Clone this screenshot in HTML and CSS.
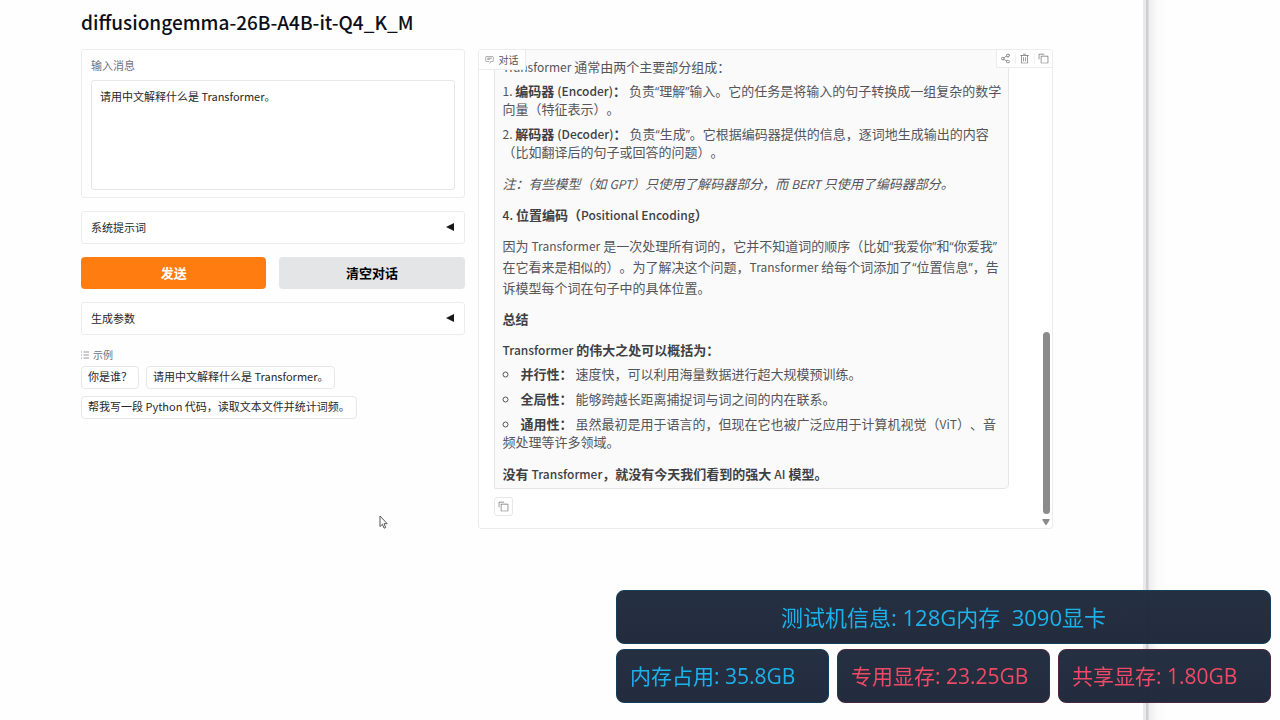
FILE: index.html
```html
<!DOCTYPE html>
<html lang="zh-CN">
<head>
    <meta charset="UTF-8">
    <meta name="viewport" content="width=device-width, initial-scale=1.0">
    <title>diffusiongemma-26B-A4B-it-Q4_K_M</title>
    <link rel="stylesheet" href="styles.css">
</head>
<body>
    <main class="window">
        <h1>diffusiongemma-26B-A4B-it-Q4_K_M</h1>

        <div class="columns">
            <!-- Left: input and settings -->
            <section class="controls">
                <div class="block message-block">
                    <label for="message">输入消息</label>
                    <textarea id="message">请用中文解释什么是 Transformer。</textarea>
                </div>

                <button class="block accordion" type="button"><span>系统提示词</span><svg class="arrow" viewBox="0 0 8 8"><path d="M8 0v8L0 4z"/></svg></button>

                <div class="actions">
                    <button class="btn primary" type="button">发送</button>
                    <button class="btn secondary" type="button">清空对话</button>
                </div>

                <button class="block accordion" type="button"><span>生成参数</span><svg class="arrow" viewBox="0 0 8 8"><path d="M8 0v8L0 4z"/></svg></button>

                <div class="examples">
                    <div class="examples-label">
                        <svg class="list-icon" viewBox="0 0 8 8"><path d="M0 1h1M2.5 1H8M0 4h1M2.5 4H8M0 7h1M2.5 7H8"/></svg>
                        <span>示例</span>
                    </div>
                    <div class="chips">
                        <button class="chip" type="button">你是谁？</button>
                        <button class="chip" type="button">请用中文解释什么是 Transformer。</button>
                        <button class="chip" type="button">帮我写一段 Python 代码，读取文本文件并统计词频。</button>
                    </div>
                </div>
            </section>

            <!-- Right: conversation -->
            <section class="chat">
                <div class="chat-label">
                    <svg class="icon" viewBox="0 0 32 32"><path d="M17.7 30 16 29l4-7h6a2 2 0 0 0 2-2V8a2 2 0 0 0-2-2H6a2 2 0 0 0-2 2v12a2 2 0 0 0 2 2h9v2H6a4 4 0 0 1-4-4V8a4 4 0 0 1 4-4h20a4 4 0 0 1 4 4v12a4 4 0 0 1-4 4h-4.8z"/><path d="M8 10h16v2H8zM8 16h10v2H8z"/></svg>
                    <span>对话</span>
                </div>
                <div class="toolbar">
                    <button type="button" aria-label="分享"><svg class="icon" viewBox="0 0 32 32"><path d="M23 20a5 5 0 0 0-3.9 1.8l-6.3-3.9a5 5 0 0 0 0-3.8l6.3-3.9a5 5 0 1 0-1.1-3.2 5 5 0 0 0 .2 1.4l-6.4 4a5 5 0 1 0 0 7.2l6.4 4A5 5 0 1 0 23 20zm0-16a3 3 0 1 1 0 6 3 3 0 0 1 0-6zM8 19a3 3 0 1 1 0-6 3 3 0 0 1 0 6zm15 9a3 3 0 1 1 0-6 3 3 0 0 1 0 6z"/></svg></button>
                    <button type="button" aria-label="清空"><svg class="icon" viewBox="0 0 32 32"><path d="M12 12h2v12h-2zM18 12h2v12h-2z"/><path d="M4 6v2h2v20a2 2 0 0 0 2 2h16a2 2 0 0 0 2-2V8h2V6zm4 22V8h16v20zM12 2h8v2h-8z"/></svg></button>
                    <button type="button" aria-label="复制"><svg class="icon" viewBox="0 0 32 32"><path d="M28 10v18H10V10h18m0-2H10a2 2 0 0 0-2 2v18a2 2 0 0 0 2 2h18a2 2 0 0 0 2-2V10a2 2 0 0 0-2-2z"/><path d="M4 18H2V4a2 2 0 0 1 2-2h14v2H4z"/></svg></button>
                </div>

                <div class="messages">
                    <article class="bubble">
                        <p><span class="en">Transformer</span> 通常由两个主要部分组成：</p>
                        <ol>
                            <li><strong>编码器 <span class="en">(Encoder)</span>：</strong> 负责<q>理解</q>输入。它的任务是将输入的句子转换成一组复杂的数学向量（特征表示）。</li>
                            <li><strong>解码器 <span class="en">(Decoder)</span>：</strong> 负责<q>生成</q>。它根据编码器提供的信息，逐词地生成输出的内容（比如翻译后的句子或回答的问题）。</li>
                        </ol>
                        <p><em>注：有些模型（如 <span class="en">GPT</span>）只使用了解码器部分，而 <span class="en">BERT</span> 只使用了编码器部分。</em></p>
                        <p><strong><span class="en">4.</span> 位置编码（<span class="en">Positional Encoding</span>）</strong></p>
                        <p>因为 <span class="en">Transformer</span> 是一次处理所有词的，它并不知道词的顺序（比如<q>我爱你</q>和<q>你爱我</q>在它看来是相似的）。为了解决这个问题，<span class="en">Transformer</span> 给每个词添加了<q>位置信息</q>，告诉模型每个词在句子中的具体位置。</p>
                        <p><strong>总结</strong></p>
                        <p><strong><span class="en">Transformer</span> 的伟大之处可以概括为：</strong></p>
                        <ul>
                            <li><strong>并行性：</strong> 速度快，可以利用海量数据进行超大规模预训练。</li>
                            <li><strong>全局性：</strong> 能够跨越长距离捕捉词与词之间的内在联系。</li>
                            <li><strong>通用性：</strong> 虽然最初是用于语言的，但现在它也被广泛应用于计算机视觉（<span class="en">ViT</span>）、音频处理等许多领域。</li>
                        </ul>
                        <p><strong>没有 <span class="en">Transformer</span>，就没有今天我们看到的强大 <span class="en">AI</span> 模型。</strong></p>
                    </article>
                    <button class="copy" type="button" aria-label="复制消息"><svg class="icon" viewBox="0 0 32 32"><path d="M28 10v18H10V10h18m0-2H10a2 2 0 0 0-2 2v18a2 2 0 0 0 2 2h18a2 2 0 0 0 2-2V10a2 2 0 0 0-2-2z"/><path d="M4 18H2V4a2 2 0 0 1 2-2h14v2H4z"/></svg></button>
                </div>

                <div class="scrollbar">
                    <div class="thumb"></div>
                    <svg class="down" viewBox="0 0 8 6"><path d="M1 0h6q1 0 .6 1L4.8 5.4q-.8 1-1.6 0L.4 1Q0 0 1 0z"/></svg>
                </div>
            </section>
        </div>
    </main>
    <div class="desktop"></div>

    <!-- Machine monitor overlay -->
    <aside class="monitor">
        <div class="stat machine">测试机信息: 128G内存&nbsp; 3090显卡</div>
        <div class="stat">内存占用: 35.8GB</div>
        <div class="stat gpu">专用显存: 23.25GB</div>
        <div class="stat gpu">共享显存: 1.80GB</div>
    </aside>

    <svg class="cursor" viewBox="0 0 9 14"><path d="M1 1v10.5l2.4-2.2 1.7 3.9 1.6-.7L5 8.7h3.2z"/></svg>
</body>
</html>
```

FILE: styles.css
```css
* {
    box-sizing: border-box;
}

body {
    margin: 0;
    min-height: 100vh;
    display: flex;
    overflow: hidden;
    background: #fefefe;
    color: #27272a;
    font-family: "Noto Sans CJK SC", sans-serif;
    font-size: 11px;
    line-height: 16px;
    text-spacing-trim: space-all;
}

button,
textarea {
    font: inherit;
    color: inherit;
}

button {
    margin: 0;
    cursor: pointer;
}

.window {
    flex: 1;
    padding: 7px 90px 0 81px;
}

.desktop {
    width: 137px;
    background: linear-gradient(90deg, #eae8eb 0, #eae8eb 3px, #cfced1 3px, #cfced1 5px, #ededee 6px, #fafafa 14px, #fefefe 24px);
}

h1 {
    margin: 0 0 13px;
    font-size: 19px;
    font-weight: 500;
    line-height: 29px;
    color: #0b0f19;
}

.columns {
    display: grid;
    grid-template-columns: 2fr 3fr;
    gap: 13px;
    align-items: start;
}

.controls {
    display: flex;
    flex-direction: column;
    gap: 13px;
}

.block {
    background: #fff;
    border: 1px solid #ececee;
    border-radius: 3px;
}

.message-block {
    display: flex;
    flex-direction: column;
    gap: 7px;
    padding: 7px 9px;
}

.message-block label {
    color: #71717a;
}

textarea {
    height: 110px;
    padding: 7px 8px;
    border: 1px solid #e7e7e9;
    border-radius: 3px;
    background: #fff;
    outline: none;
    resize: none;
}

.accordion {
    display: flex;
    justify-content: space-between;
    align-items: center;
    height: 33px;
    padding: 0 10px 2px 9px;
    text-align: left;
}

.arrow {
    width: 8px;
    height: 8px;
    fill: #18181b;
}

.actions {
    display: grid;
    grid-template-columns: 1fr 1fr;
    gap: 13px;
}

.btn {
    height: 32px;
    border: 0;
    border-radius: 4px;
    font-size: 13px;
    font-weight: 700;
}

.primary {
    background: #ff7c11;
    color: #fff;
}

.secondary {
    background: #e4e5e7;
    color: #000;
}

.examples-label {
    display: flex;
    align-items: center;
    gap: 4px;
    margin-bottom: 4px;
    font-size: 10px;
    line-height: 14px;
    color: #71717a;
}

.list-icon {
    width: 8px;
    height: 8px;
    stroke: #9a9aa0;
    stroke-width: 1;
}

.chips {
    display: flex;
    flex-wrap: wrap;
    gap: 7px;
}

.chip {
    height: 23px;
    padding: 0 6px 2px;
    border: 1px solid #e7e7e9;
    border-radius: 4px;
    background: #fff;
    line-height: 19px;
}

/* Conversation panel */
.chat {
    position: relative;
    display: flex;
    height: 480px;
    overflow: hidden;
    background: #fff;
    border: 1px solid #ececee;
    border-radius: 3px;
}

.icon {
    width: 11px;
    height: 11px;
    fill: #6f6f75;
}

.chat-label,
.toolbar {
    position: absolute;
    top: 0;
    z-index: 1;
    display: flex;
    align-items: center;
    background: #fff;
    border: 1px solid #ececee;
    border-top: 0;
}

.chat-label {
    left: 0;
    gap: 5px;
    height: 20px;
    padding: 0 6px;
    border-left: 0;
    font-size: 10px;
    color: #52525b;
}

.chat-label .icon {
    width: 9px;
    height: 9px;
}

.toolbar {
    right: 0;
    gap: 1px;
    height: 18px;
    border-right: 0;
}

.toolbar button {
    display: flex;
    padding: 0 3px;
    border: 0;
    background: none;
}

.toolbar button + button {
    border-left: 1px solid #f0f0f1;
}

.messages {
    flex: 1;
    display: flex;
    flex-direction: column;
    justify-content: flex-end;
    align-items: flex-start;
    padding: 0 43px 12px 15px;
}

.bubble {
    width: 100%;
    padding: 20px 2px 4px 8px;
    background: #fafafa;
    border: 1px solid #e6e6e8;
    border-radius: 0 0 5px 0;
    font-size: 13px;
    line-height: 21px;
    color: #55555a;
}

.bubble p {
    margin: 10px 0;
}

.bubble p:first-child,
.bubble p:last-child {
    margin: 0;
}

.bubble strong {
    font-weight: 700;
    color: #3f3f44;
}

.bubble ol,
.bubble ul {
    margin: 5px 0 12px;
    padding: 0;
    line-height: 18px;
    list-style-position: inside;
}

.bubble p:has(+ ul) {
    margin-bottom: 5px;
}

.bubble ul {
    list-style-type: circle;
}

.bubble li + li {
    margin-top: 7px;
}

.bubble li::marker {
    font-size: 12px;
}

.en {
    font-size: 12px;
}

strong .en {
    font-weight: 500;
}

/* Narrow quotation marks */
q {
    quotes: "“" "”";
}

q::before,
q::after {
    font-family: "Open Sans", sans-serif;
    font-size: 12px;
    line-height: 1;
}

.copy {
    display: flex;
    margin-top: 8px;
    padding: 3px;
    border: 1px solid #e7e7e9;
    border-radius: 3px;
    background: #fff;
}

.scrollbar {
    position: absolute;
    right: 2px;
    bottom: 3px;
    display: flex;
    flex-direction: column;
    align-items: center;
    gap: 5px;
}

.thumb {
    width: 7px;
    height: 182px;
    border-radius: 4px;
    background: #8b8b8b;
}

.down {
    width: 8px;
    height: 6px;
    fill: #8b8b8b;
}

/* Monitor overlay */
.monitor {
    position: fixed;
    right: 9px;
    bottom: 17px;
    display: grid;
    grid-template-columns: repeat(3, 213px);
    gap: 5px 8px;
    font-family: "Open Sans", "Noto Sans CJK SC", sans-serif;
    font-size: 21px;
}

.stat {
    display: flex;
    align-items: center;
    height: 54px;
    padding: 0 13px;
    border: 1px solid #12405a;
    border-radius: 8px;
    background: linear-gradient(rgba(30, 41, 59, 0.97), rgba(27, 37, 55, 0.97));
    color: #1eb2ec;
    white-space: nowrap;
}

.machine {
    grid-column: 1 / -1;
    justify-content: center;
    font-size: 22px;
}

.gpu {
    border-color: #4a2742;
    color: #ee4a66;
}

.cursor {
    position: absolute;
    left: 379px;
    top: 515px;
    width: 9px;
    height: 14px;
    fill: #fff;
    stroke: #55555a;
    stroke-width: 1;
}
```
